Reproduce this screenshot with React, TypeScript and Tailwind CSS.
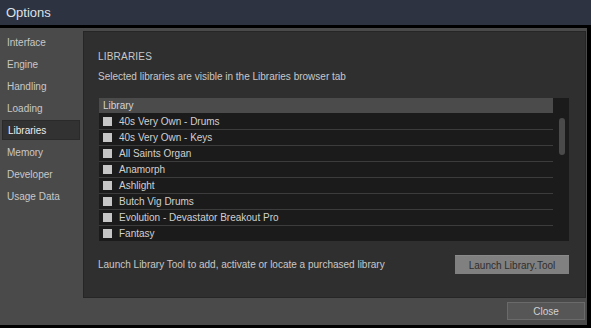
const NAV = ["Interface", "Engine", "Handling", "Loading", "Libraries", "Memory", "Developer", "Usage Data"];

const LIBS = [
  "40s Very Own - Drums",
  "40s Very Own - Keys",
  "All Saints Organ",
  "Anamorph",
  "Ashlight",
  "Butch Vig Drums",
  "Evolution - Devastator Breakout Pro",
  "Fantasy",
];

export default function App() {
  return (
    <div
      className="w-[591px] h-[328px] overflow-hidden flex flex-col bg-black text-[10px] text-[#c8c8c8]"
      style={{ fontFamily: '"Liberation Sans", Arial, sans-serif' }}
    >
      {/* Title bar */}
      <div className="h-[25px] shrink-0 bg-[#2d3341] flex items-center pl-[6px] text-[13px] text-[#dde1e8]">
        Options
      </div>
      <div className="h-[3px] shrink-0 bg-black" />

      <div className="flex h-[297px] bg-[#4a4a4a] mr-[4px]">
        {/* Sidebar */}
        <div className="w-[83px] shrink-0 flex flex-col pt-[3px]">
          {NAV.map((n) => (
            <div key={n} className="h-[22px] flex items-center px-[2px]">
              {n === "Libraries" ? (
                <div className="w-[78px] h-[20px] flex items-center pl-[5px] bg-[#323232] border border-[#2a2a2a] text-[#ececec]">
                  {n}
                </div>
              ) : (
                <span className="pl-[5px]">{n}</span>
              )}
            </div>
          ))}
        </div>

        {/* Main */}
        <div className="flex-1 flex flex-col pt-[3px]">
          <div className="w-[503px] h-[267px] bg-[#2f2f2f] border border-[#262626] flex flex-col pl-[14px]">
            <div className="mt-[18px] h-[14px] leading-[14px] tracking-[0.2px]">LIBRARIES</div>
            <div className="mt-[6px] h-[14px] leading-[14px]">
              Selected libraries are visible in the Libraries browser tab
            </div>

            {/* List */}
            <div className="mt-[14px] ml-[1px] w-[470px] h-[143px] overflow-hidden flex bg-[#1b1b1b]">
              <div className="flex-1 flex flex-col">
                <div className="h-[15px] shrink-0 bg-[#4b4b4b] flex items-center pl-[4px] text-[#d4d4d4]">
                  Library
                </div>
                <div className="pt-[1px] flex flex-col">
                  {LIBS.map((l) => (
                    <div key={l} className="h-[16px] shrink-0 flex items-center border-b border-[#3c3c3c] pl-[4px]">
                      <div className="w-[9px] h-[9px] bg-[#c6c6c6]" />
                      <span className="ml-[7px] text-[#d0d0d0]">{l}</span>
                    </div>
                  ))}
                </div>
              </div>
              <div className="w-[16px] shrink-0 pt-[20px] pl-[6px]">
                <div className="w-[6px] h-[37px] rounded-full bg-[#4a4a4a]" />
              </div>
            </div>

            <div className="mt-[14px] w-[471px] h-[19px] flex items-center justify-between">
              <span>Launch Library Tool to add, activate or locate a purchased library</span>
              <div className="w-[114px] h-[19px] bg-[#808080] border-t border-[#8a8a8a] flex items-center justify-center text-[#2e2e2e]">
                Launch Library.Tool
              </div>
            </div>
          </div>

          {/* Footer */}
          <div className="flex justify-end pr-[2px] pt-[4px]">
            <div className="w-[78px] h-[18px] bg-[#565656] border border-[#6a6a6a] flex items-center justify-center text-[#d2d2d2]">
              Close
            </div>
          </div>
        </div>
      </div>
    </div>
  );
}
